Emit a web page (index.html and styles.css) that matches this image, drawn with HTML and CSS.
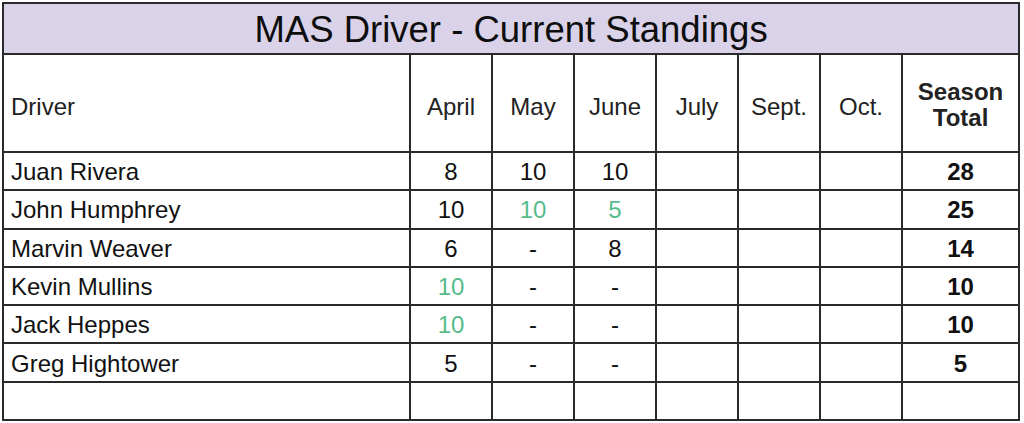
FILE: index.html
```html
<!DOCTYPE html>
<html>
<head>
<meta charset="utf-8">
<link rel="stylesheet" href="styles.css">
</head>
<body>
<table class="standings">
  <colgroup>
    <col class="c-driver">
    <col class="c-month"><col class="c-month"><col class="c-month">
    <col class="c-month"><col class="c-month"><col class="c-month">
    <col class="c-total">
  </colgroup>
  <tr class="title-row"><td colspan="8" class="title">MAS Driver - Current Standings</td></tr>
  <tr class="head-row">
    <td class="name">Driver</td>
    <td>April</td><td>May</td><td>June</td><td>July</td><td>Sept.</td><td>Oct.</td>
    <td class="total">Season<br>Total</td>
  </tr>
  <tr class="row"><td class="name">Juan Rivera</td><td>8</td><td>10</td><td>10</td><td></td><td></td><td></td><td class="total">28</td></tr>
  <tr class="row"><td class="name">John Humphrey</td><td>10</td><td class="win">10</td><td class="win">5</td><td></td><td></td><td></td><td class="total">25</td></tr>
  <tr class="row"><td class="name">Marvin Weaver</td><td>6</td><td>-</td><td>8</td><td></td><td></td><td></td><td class="total">14</td></tr>
  <tr class="row"><td class="name">Kevin Mullins</td><td class="win">10</td><td>-</td><td>-</td><td></td><td></td><td></td><td class="total">10</td></tr>
  <tr class="row"><td class="name">Jack Heppes</td><td class="win">10</td><td>-</td><td>-</td><td></td><td></td><td></td><td class="total">10</td></tr>
  <tr class="row"><td class="name">Greg Hightower</td><td>5</td><td>-</td><td>-</td><td></td><td></td><td></td><td class="total">5</td></tr>
  <tr class="row"><td class="name"></td><td></td><td></td><td></td><td></td><td></td><td></td><td class="total"></td></tr>
</table>
</body>
</html>
```
FILE: styles.css
```css
html, body {
  margin: 0;
  padding: 0;
  background: #ffffff;
}
body {
  padding: 2px 0 0 2px;
  font-family: "Liberation Sans", Arial, sans-serif;
  color: #111111;
}
.standings {
  border-collapse: collapse;
  table-layout: fixed;
  width: 1018px;
}
.c-driver { width: 407px; }
.c-month { width: 82px; }
.c-total { width: 117px; }
.standings td {
  border: 2px solid #2a2a2a;
  padding: 0;
  text-align: center;
  font-size: 24px;
  line-height: 27px;
  overflow: hidden;
  white-space: nowrap;
}
.title-row td {
  height: 47px;
  background: #d9d2e9;
  font-size: 36.5px;
  line-height: 40px;
  padding-top: 2px;
  color: #0d0d0d;
}
.head-row td {
  height: 89px;
  padding-top: 7px;
  color: #222222;
}
.head-row td.total {
  line-height: 26px;
  padding-top: 4px;
  height: 92px;
}
.row td {
  height: 35.3px;
  padding-top: 1px;
}
.standings td.name {
  text-align: left;
  padding-left: 7px;
}
.standings td.total {
  font-weight: bold;
}
.standings td.win {
  color: #57bb8a;
}
```
